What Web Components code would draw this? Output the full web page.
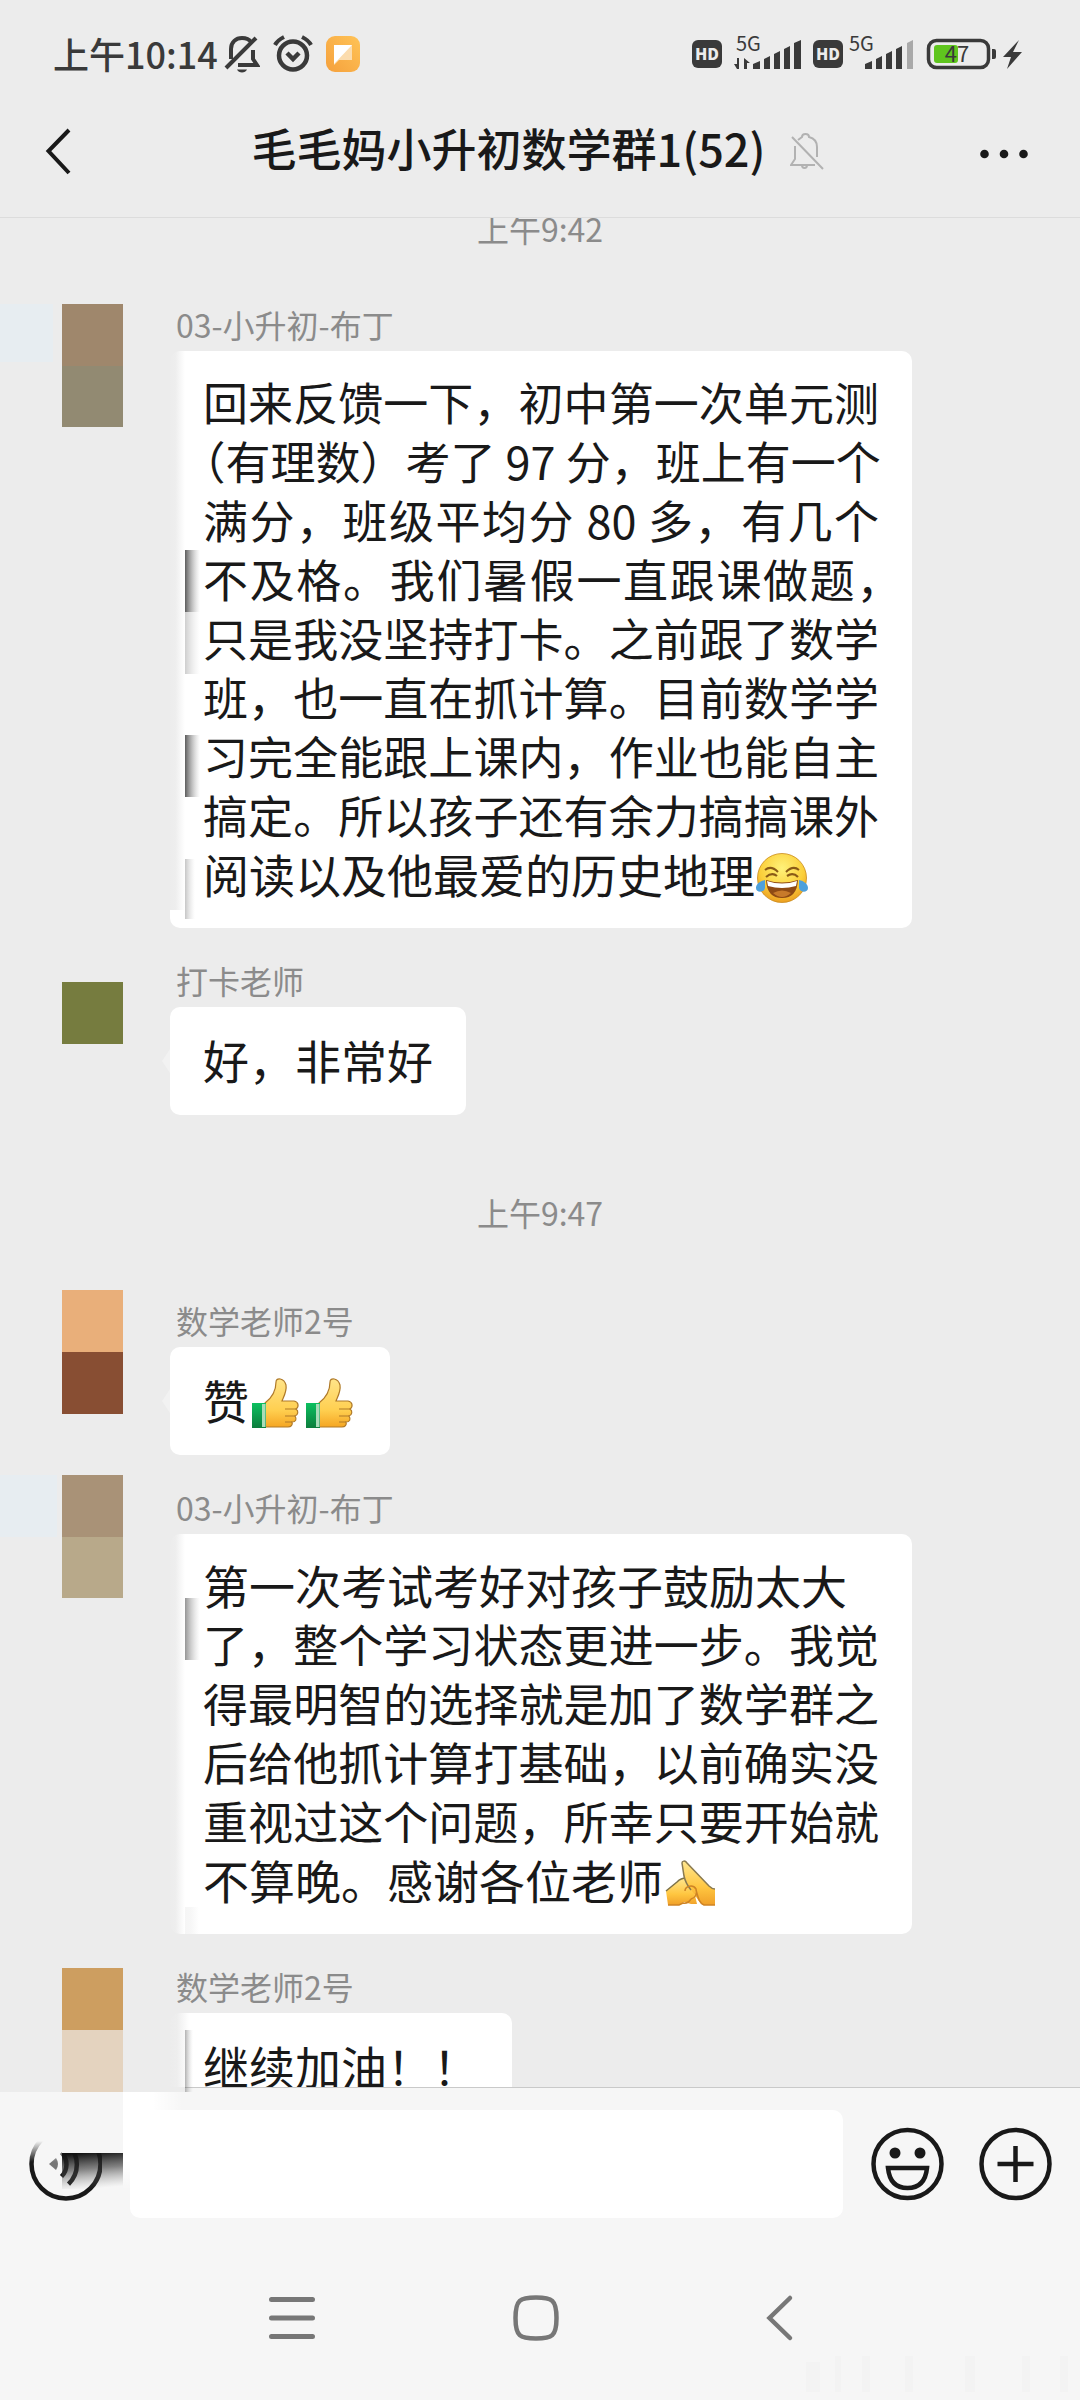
<!DOCTYPE html>
<html lang="zh-CN">
<head>
<meta charset="utf-8">
<meta name="viewport" content="width=device-width, initial-scale=1">
<title>毛毛妈小升初数学群1(52)</title>
<style>
  html, body { margin: 0; height: 100%; }
  body { background: #ececec; color: #191919; font-family: "Noto Sans CJK SC", "Noto Sans", sans-serif; }
</style>
</head>
<body>
<chat-app>
  <status-bar slot="top"></status-bar>
  <chat-header slot="top" count="52">毛毛妈小升初数学群1</chat-header>

  <time-stamp class="first">上午9:42</time-stamp>
  <chat-message name="03-小升初-布丁">
    <chat-line full>回来反馈一下，初中第一次单元测</chat-line>
    <chat-line full><half-mark>（</half-mark>有理数）考了 97 分，班上有一个</chat-line>
    <chat-line full>满分，班级平均分 80 多，有几个</chat-line>
    <chat-line full>不及格。我们暑假一直跟课做题<half-mark>，</half-mark></chat-line>
    <chat-line full>只是我没坚持打卡。之前跟了数学</chat-line>
    <chat-line full>班，也一直在抓计算。目前数学学</chat-line>
    <chat-line full>习完全能跟上课内，作业也能自主</chat-line>
    <chat-line full>搞定。所以孩子还有余力搞搞课外</chat-line>
    <chat-line>阅读以及他最爱的历史地理<chat-emoji kind="joy"></chat-emoji></chat-line>
  </chat-message>
  <chat-message name="打卡老师"><chat-line>好，非常好</chat-line></chat-message>
  <time-stamp>上午9:47</time-stamp>
  <chat-message name="数学老师2号"><chat-line>赞<chat-emoji kind="thumb"></chat-emoji><chat-emoji kind="thumb"></chat-emoji></chat-line></chat-message>
  <chat-message name="03-小升初-布丁">
    <chat-line>第一次考试考好对孩子鼓励太大</chat-line>
    <chat-line full>了，整个学习状态更进一步。我觉</chat-line>
    <chat-line full>得最明智的选择就是加了数学群之</chat-line>
    <chat-line full>后给他抓计算打基础，以前确实没</chat-line>
    <chat-line full>重视过这个问题，所幸只要开始就</chat-line>
    <chat-line>不算晚。感谢各位老师<chat-emoji kind="salute"></chat-emoji></chat-line>
  </chat-message>
  <chat-message name="数学老师2号"><chat-line>继续加油！！</chat-line></chat-message>

  <chat-composer slot="bottom"></chat-composer>
  <system-nav slot="bottom"></system-nav>
  <privacy-mosaic slot="cover"></privacy-mosaic>
</chat-app>

<script>
const define = (name, markup, setup) => {
  const tpl = document.createElement('template');
  tpl.innerHTML = markup;
  customElements.define(name, class extends HTMLElement {
    constructor() {
      super();
      this.attachShadow({ mode: 'open' }).append(tpl.content.cloneNode(true));
    }
    connectedCallback() { if (setup) setup(this, this.shadowRoot); }
  });
};

define('chat-app', `
  <style>
    :host { position: relative; display: flex; flex-direction: column; height: 100vh; overflow: hidden; }
    main { flex: 1; min-height: 0; overflow: hidden; }
    .thread { display: flex; flex-direction: column; gap: 30px; margin-top: -12px; }
  </style>
  <slot name="top"></slot>
  <main><div class="thread"><slot></slot></div></main>
  <slot name="bottom"></slot>
  <slot name="cover"></slot>`);

define('status-bar', `
  <style>
    :host { display: flex; align-items: center; justify-content: space-between; height: 84px; padding: 24px 58px 0 53px; box-sizing: border-box; color: #3a3a3a; }
    .left { display: flex; align-items: center; }
    .clock { font-size: 36px; line-height: 48px; font-weight: 500; margin-right: 6px; padding-bottom: 2px; }
    .left svg { margin-right: 13px; }
    svg { display: block; flex: none; }
    text { font-family: "Noto Sans CJK SC", sans-serif; }
  </style>
  <div class="left">
    <span class="clock">上午10:14</span>
    <svg width="36" height="40" viewBox="0 0 36 40" fill="none" stroke="#3a3a3a" stroke-width="4">
      <path d="M7 25V15C7 8 12 4 18 4c4 0 7 1 9 4M29 16v9l4 6H14"/><path d="M2 34 32 4" /><path d="M13 35.500h10c-1.500 4-8.500 4-10 0z" fill="#3a3a3a" stroke="none"/>
    </svg>
    <svg width="40" height="40" viewBox="0 0 40 40" fill="none" stroke="#3a3a3a" stroke-width="4.500">
      <circle cx="20" cy="21.500" r="14"/><path d="m14 19 6 6 6-6"/><path d="M2 11c2-4 5-6 9-8M38 11c-2-4-5-6-9-8" stroke-width="4"/>
    </svg>
    <svg width="34" height="36" viewBox="0 0 34 36">
      <defs><linearGradient id="o" x1="0" y1="1" x2="1" y2="0"><stop offset="0" stop-color="#f5a03c"/><stop offset="1" stop-color="#ffc357"/></linearGradient></defs>
      <rect width="34" height="36" rx="9" fill="url(#o)"/><path d="M8 9h18v15H13l-5 5z" fill="#fbdcae"/><path d="M8 9h18L8 28z" fill="#fff"/>
    </svg>
  </div>
  <svg width="330" height="60" viewBox="692 24 330 60" fill="#3a3a3a">
    <rect x="692" y="40" width="30" height="28" rx="6"/><text x="707" y="60" font-size="16" font-weight="900" text-anchor="middle" fill="#ececec">HD</text>
    <text x="736" y="51" font-size="20">5G</text>
    <path d="M739 58v11h-2l-3-5h3v-6zM744 69V58l6 5h-3v6zM753 69v-5l7-3v8zM764 69V59l6-3v13zM774 69V54l6-3v18zM784 69V49l6-3v23zM794 69V43l7-3v29z"/>
    <rect x="813" y="40" width="30" height="28" rx="6"/><text x="828" y="60" font-size="16" font-weight="900" text-anchor="middle" fill="#ececec">HD</text>
    <text x="849" y="51" font-size="20">5G</text>
    <path d="M865 69v-5l7-3v8zM876 69V59l6-3v13zM886 69V54l6-3v18zM896 69V49l6-3v23z"/><path d="M907 69V43l6-3v29z" fill="#a9a9a9"/>
    <rect x="928.500" y="40.500" width="60" height="27" rx="8" fill="none" stroke="#3a3a3a" stroke-width="3.500"/>
    <rect x="934" y="45" width="24" height="18" rx="3" fill="#5fc51e"/>
    <text x="957" y="62" font-size="22" text-anchor="middle">47</text>
    <path d="M992 49h2q2 0 2 2v6q0 2-2 2h-2zM1019 40l-16 17h8l-4 12 15-17h-9z"/>
  </svg>`);

define('chat-header', `
  <style>
    :host { display: flex; align-items: center; justify-content: space-between; height: 134px; box-sizing: border-box; padding: 0 50px 0 45px; border-bottom: 1px solid #dcdcdc; }
    button { border: 0; background: none; padding: 0; display: block; flex: none; width: 50px; }
    h1 { margin: 0; padding-bottom: 5px; font-size: 45px; line-height: 60px; font-weight: 500; white-space: nowrap; }
    .title { display: flex; align-items: center; gap: 24px; }
    svg { display: block; }
  </style>
  <button aria-label="返回"><svg width="26" height="48" viewBox="0 0 26 48" fill="none" stroke="#191919" stroke-width="4"><path d="M24 3 3.500 24 24 46"/></svg></button>
  <div class="title">
    <h1><slot></slot>(<span id="n"></span>)</h1>
    <svg width="34" height="38" viewBox="0 0 34 38" fill="none" stroke="#b2b2b2" stroke-width="2">
      <path d="M5 14v13l-4 6h24M27 25V15c0-6-4-9-8-10 0-4-7-4-7 0l-4 3M12 33c0 4 5 4 5 0M2 5l31 32"/>
    </svg>
  </div>
  <button aria-label="更多"><svg width="50" height="48" viewBox="0 0 50 48" fill="#191919"><circle cx="4.500" cy="27" r="4.300"/><circle cx="24" cy="27" r="4.300"/><circle cx="43.500" cy="27" r="4.300"/></svg></button>`,
  (el, root) => { root.getElementById('n').textContent = el.getAttribute('count'); });

define('time-stamp', `
  <style>
    :host { display: block; text-align: center; color: #8b8b8b; font-size: 32px; line-height: 44px; margin: 45px 0 34px; }
    :host(.first) { margin: 0 0 22px; }
  </style><slot></slot>`);

define('chat-message', `
  <style>
    :host { display: flex; flex-direction: column; align-items: flex-start; padding: 0 168px 0 170px; }
    .name { font-size: 32px; line-height: 44px; color: #8b8b8b; padding: 0 6px 5px; }
    .bubble { background: #fff; border-radius: 10px; padding: 21px 33px 25px; min-height: 108px; box-sizing: border-box; display: flex; flex-direction: column; justify-content: center; }
  </style>
  <div class="name"></div><div class="bubble"><slot></slot></div>`,
  (el, root) => { root.querySelector('.name').textContent = el.getAttribute('name'); });

define('chat-line', `
  <style>
    :host { display: block; font-size: 46px; line-height: 59px; height: 59px; white-space: nowrap; }
    :host([full]) { width: 676px; font-size: 45px; text-align: justify; text-align-last: justify; }
  </style><slot></slot>`);

define('half-mark', `<style>:host { display: inline; font-feature-settings: "halt"; }</style><slot></slot>`);

const emoji = {
  joy: `<defs><radialGradient id="j" cx=".5" cy=".3" r=".75"><stop offset="0" stop-color="#fff27a"/><stop offset=".6" stop-color="#fbcf3a"/><stop offset="1" stop-color="#e9951c"/></radialGradient></defs>
    <circle cx="27" cy="27" r="24.500" fill="url(#j)" stroke="#c98a1c" stroke-width=".8"/>
    <path d="M10 19q6-5 13 2M31 21q7-7 13-2" fill="none" stroke="#8a5a16" stroke-width="2"/>
    <path d="M11 26q6-5 11-1M32 25q6-4 11 1" fill="none" stroke="#8a5a16" stroke-width="2.200"/>
    <path d="M11 29q16 5 32 0-1 18-16 18T11 29z" fill="#8e4a14"/><path d="M12 30q15 5 30 0l-1 5q-14 4-28 0z" fill="#fff"/><path d="M18 42q9-5 18 0-9 8-18 0z" fill="#c87a2a"/>
    <path d="M10 29c-5 1-9 4-9 8 0 5 8 5 9 0zM44 29c5 1 9 4 9 8 0 5-8 5-9 0z" fill="#4da0dc"/>`,
  thumb: `<defs><linearGradient id="t" x1="0" y1="0" x2="0" y2="1"><stop offset="0" stop-color="#ffe489"/><stop offset=".65" stop-color="#ffcf50"/><stop offset="1" stop-color="#f5a623"/></linearGradient><linearGradient id="g" x1="0" y1="0" x2="0" y2="1"><stop offset="0" stop-color="#0cc060"/><stop offset="1" stop-color="#0c7d3c"/></linearGradient></defs>
    <g transform="translate(-2 -1)"><path d="M18 27c8-6 11-12 11-21 0-5 8-4 10 3 1 6-2 11-4 16h12c5 1 5 6 2 8 3 2 2 6-1 7 2 3 1 6-3 6 1 3-1 5-4 5H18z" fill="url(#t)" stroke="#b07a28" stroke-width="1.200"/>
    <path d="M49 33H38M48 40H38M45 46h-7" stroke="#b07a28" stroke-width="1.200"/>
    <path d="M5 27h14v25H5z" fill="url(#g)"/><path d="M15 28h3.500v23H15z" fill="#a9dcb8"/></g>`,
  salute: `<defs><linearGradient id="s" x1="0" y1="0" x2="0" y2="1"><stop offset="0" stop-color="#ffe78f"/><stop offset=".6" stop-color="#ffc640"/><stop offset="1" stop-color="#f0a029"/></linearGradient></defs>
    <path d="M3 34 14 25c5-4 9-4 14-4l6 26H28l-7-2-4 3H5z" fill="url(#s)"/>
    <path d="M3 34 14 25c3-3 6-4 9-4" fill="none" stroke="#7d7148" stroke-width="1.500"/>
    <path d="M19 6c0-2 3-3 5 0l22 23c2 2 4 3 6 3v16H40c-5-3-7-10-12-15-4-5-6-9-7-14z" fill="url(#s)"/>
    <path d="M28 33c-4-5-6-9-7-14L19 6c0-2 3-3 5 0l22 23c2 2 4 3 6 3" fill="none" stroke="#8a7a50" stroke-width="1.500"/>
    <path d="M22 34c0-5 8-7 11-2 2 5-1 9-5 10M33 33c2 7 3 13 8 15h11M28 42q-3 5-8 4l-4 2H5" fill="none" stroke="#cf8424" stroke-width="1.500"/>`
};
define('chat-emoji', `
  <style>:host { display: inline-block; width: 54px; height: 54px; line-height: 0; vertical-align: -12px; }</style>
  <svg width="54" height="54" viewBox="0 0 54 54" aria-hidden="true"></svg>`,
  (el, root) => { root.querySelector('svg').innerHTML = emoji[el.getAttribute('kind')]; });

define('chat-composer', `
  <style>
    :host { display: flex; align-items: center; gap: 28px; padding: 22px 28px 17px 29px; background: #f6f6f6; border-top: 1px solid #c9c9c9; }
    button { border: 0; background: none; padding: 0; flex: none; display: block; }
    button:last-child { margin-left: 7px; }
    input { flex: 1; min-width: 0; height: 108px; box-sizing: border-box; border: 0; border-radius: 10px; background: #fff; padding: 0 24px; font: inherit; font-size: 45px; outline: 0; }
    svg { display: block; }
  </style>
  <button aria-label="语音"><svg width="73" height="74" viewBox="0 0 73 74" fill="none" stroke="#191919" stroke-width="4.500"><circle cx="37" cy="37" r="34.500"/><path d="M32.500 25.500a17 17 0 0 1 0 24M39.500 18a27 27 0 0 1 0 39"/><path d="m20 37 7-6q4 6 0 12z" fill="#777" stroke="none"/></svg></button>
  <input type="text" aria-label="消息">
  <button aria-label="表情"><svg width="73" height="74" viewBox="0 0 73 74" fill="none" stroke="#191919" stroke-width="4.500"><circle cx="36.500" cy="37" r="34"/><path d="M17 41h39q-2 20-19.500 20T17 41z" /><circle cx="24" cy="26" r="5.500" fill="#191919" stroke="none"/><circle cx="49" cy="26" r="5.500" fill="#191919" stroke="none"/></svg></button>
  <button aria-label="更多功能"><svg width="73" height="74" viewBox="0 0 73 74" fill="none" stroke="#191919" stroke-width="4.500"><circle cx="36.500" cy="37" r="34"/><path d="M36.500 19v36M18.500 37h36"/></svg></button>`);

define('system-nav', `
  <style>
    :host { display: flex; align-items: center; justify-content: center; gap: 196px; height: 165px; background: #f6f6f6; padding-right: 8px; }
    button { border: 0; background: none; padding: 0; }
    svg { display: block; }
  </style>
  <button aria-label="最近任务"><svg width="48" height="48" viewBox="0 0 48 48" stroke="#777" stroke-width="5" stroke-linecap="round"><path d="M3.500 5.500h41M3.500 24h41M3.500 42.500h41"/></svg></button>
  <button aria-label="主屏幕"><svg width="48" height="48" viewBox="0 0 48 48" fill="none" stroke="#777" stroke-width="4.500"><path d="M24 3.500c16 0 20.500 2 20.500 20.500S40 44.500 24 44.500 3.500 42.500 3.500 24 8 3.500 24 3.500z"/></svg></button>
  <button aria-label="后退"><svg width="48" height="48" viewBox="0 0 48 48" fill="none" stroke="#777" stroke-width="4.500" stroke-linecap="round"><path d="M34 4 13.500 24 34 44"/></svg></button>`);

/* Pixelated blocks that hide the senders' pictures, with the smears they leave on nearby edges. */
define('privacy-mosaic', `
  <style>
    :host { position: absolute; left: 0; top: 0; pointer-events: none; line-height: 0; }
  </style>
  <svg width="1080" height="2400" viewBox="0 0 1080 2400" aria-hidden="true">
    <defs>
      <linearGradient id="edge"><stop offset="0" stop-color="#ececec"/><stop offset=".4" stop-color="#ececec" stop-opacity=".9"/><stop offset="1" stop-color="#ececec" stop-opacity="0"/></linearGradient>
      <linearGradient id="dark"><stop offset="0" stop-color="#333" stop-opacity=".8"/><stop offset=".4" stop-color="#555" stop-opacity=".45"/><stop offset="1" stop-color="#999" stop-opacity="0"/></linearGradient>
      <linearGradient id="down" x1="0" y1="0" x2="0" y2="1"><stop offset="0" stop-color="#f6f6f6"/><stop offset=".7" stop-color="#f6f6f6"/><stop offset="1" stop-color="#f6f6f6" stop-opacity="0"/></linearGradient>
      <linearGradient id="ink" x1=".3" y1="0" x2=".45" y2="1"><stop offset="0" stop-color="#111"/><stop offset=".45" stop-color="#333" stop-opacity=".6"/><stop offset="1" stop-color="#888" stop-opacity="0"/></linearGradient>
      <linearGradient id="whiteR"><stop offset="0" stop-color="#fff"/><stop offset=".5" stop-color="#fff"/><stop offset="1" stop-color="#fff" stop-opacity="0"/></linearGradient>
      <linearGradient id="whiteD" x1="0" y1="0" x2="0" y2="1"><stop offset="0" stop-color="#fff"/><stop offset=".7" stop-color="#fff"/><stop offset="1" stop-color="#fff" stop-opacity="0"/></linearGradient>
    </defs>
    <g fill="#e7edf1"><path d="M0 304h53v58H0zM0 1475h57v62H0z"/></g>
    <path d="M62 304h61v62H62z" fill="#9f876c"/><path d="M62 366h61v61H62z" fill="#928a72"/>
    <path d="M62 982h61v62H62z" fill="#767c3f"/>
    <path d="M62 1290h61v62H62z" fill="#e9af7a"/><path d="M62 1352h61v62H62z" fill="#884e33"/>
    <path d="M62 1475h61v62H62z" fill="#a99277"/><path d="M62 1537h61v61H62z" fill="#b8a98a"/>
    <path d="M62 1968h61v62H62z" fill="#cd9e60"/>
    <g fill="url(#edge)">
      <rect x="169" y="350" width="16" height="560"/><rect x="169" y="1533" width="16" height="402"/><rect x="169" y="2012" width="20" height="75"/>
      <rect x="185" y="1907" width="14" height="28" opacity=".5"/>
    </g>
    <path d="m162 1061 8-12v24zM162 1401l8-12v24z" fill="#f2f2f2"/>
    <g fill="url(#dark)">
      <rect x="185" y="550" width="15" height="62"/><rect x="185" y="612" width="15" height="62" opacity=".3"/>
      <rect x="185" y="735" width="15" height="62"/><rect x="185" y="859" width="10" height="60" opacity=".35"/>
      <rect x="185" y="1598" width="15" height="62" opacity=".65"/><rect x="185" y="2030" width="8" height="62" opacity=".45"/>
    </g>
    <path d="M0 2087h185v5H0z" fill="#ececec"/>
    <path d="M62 2030h61v62H62z" fill="#e4d3bf"/>
    <rect x="123" y="2092" width="60" height="18" fill="url(#whiteR)"/>
    <rect x="123" y="2092" width="20" height="98" fill="url(#whiteD)"/>
    <rect x="0" y="2092" width="62" height="70" fill="url(#down)"/>
    <path d="M62 2092h61v61H62z" fill="#f6f6f6"/>
    <rect x="62" y="2153" width="61" height="36" fill="url(#ink)"/>
    <g fill="#f3f3f3"><path d="M806 2362h14v30h-14zM835 2356h6v36h-6zM862 2356h8v36h-8zM905 2356h8v36h-8zM965 2356h10v36h-10zM1022 2356h8v36h-8zM1060 2356h8v36h-8z"/></g>
  </svg>`);
</script>
</body>
</html>
